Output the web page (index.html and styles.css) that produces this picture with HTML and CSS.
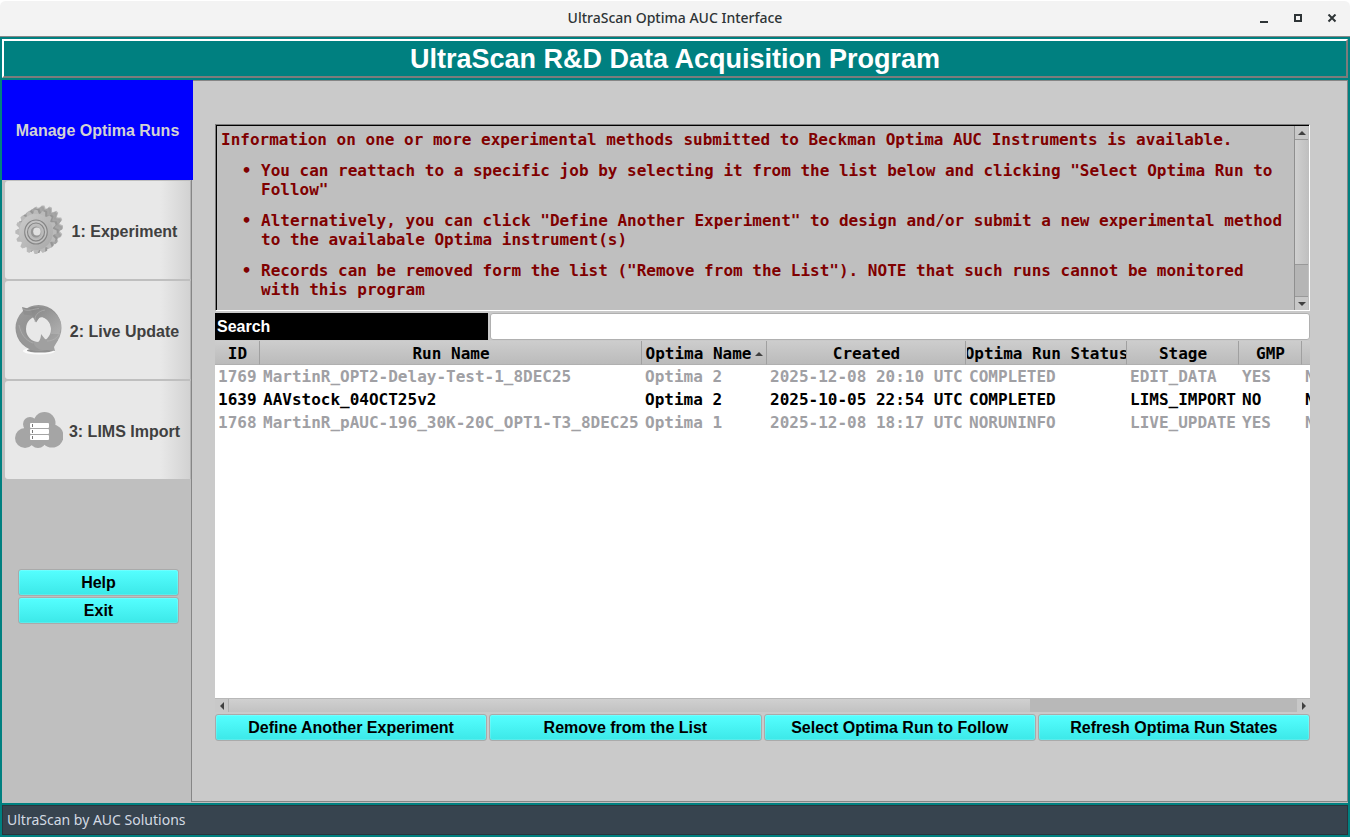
FILE: index.html
```html
<!DOCTYPE html>
<html lang="en">
<head>
    <meta charset="UTF-8">
    <meta name="viewport" content="width=device-width, initial-scale=1.0">
    <title>UltraScan Optima AUC Interface</title>
    <link rel="stylesheet" href="styles.css">
</head>
<body>
    <div class="titlebar">
        <span class="titlebar-text">UltraScan Optima AUC Interface</span>
        <div class="window-controls">
            <button type="button" aria-label="Minimize">
                <svg width="10" height="10" viewBox="0 0 10 10"><path d="M1 7h8v2H1z" fill="#2e3436"/></svg>
            </button>
            <button type="button" aria-label="Maximize">
                <svg width="10" height="10" viewBox="0 0 10 10"><path d="M2 1h6v6H2z" fill="none" stroke="#2e3436" stroke-width="2"/></svg>
            </button>
            <button type="button" aria-label="Close">
                <svg width="10" height="10" viewBox="0 0 10 10"><path d="M1.500 .5l7 7M8.500 .5l-7 7" stroke="#2e3436" stroke-width="2"/></svg>
            </button>
        </div>
    </div>

    <div class="window">
        <h1 class="banner">UltraScan R&amp;D Data Acquisition Program</h1>

        <div class="workspace">
            <nav class="sidebar">
                <button type="button" class="tab tab-active"><span>Manage Optima Runs</span></button>
                <button type="button" class="tab">
                    <svg class="tab-icon" width="48" height="50" viewBox="0 0 48 50">
                        <defs>
                            <linearGradient id="gearFace" x1="0" y1="0" x2="1" y2="1">
                                <stop offset="0" stop-color="#cbcbcb"/>
                                <stop offset="1" stop-color="#a8a8a8"/>
                            </linearGradient>
                            <path id="tooth" d="M-4 -16 L-1.500 -22 H1.500 L4 -16 Z"/>
                            <g id="gear">
                                <circle r="18.500"/>
                                <use href="#tooth"/>
                                <use href="#tooth" transform="rotate(22.500)"/>
                                <use href="#tooth" transform="rotate(45)"/>
                                <use href="#tooth" transform="rotate(67.500)"/>
                                <use href="#tooth" transform="rotate(90)"/>
                                <use href="#tooth" transform="rotate(112.500)"/>
                                <use href="#tooth" transform="rotate(135)"/>
                                <use href="#tooth" transform="rotate(157.500)"/>
                                <use href="#tooth" transform="rotate(180)"/>
                                <use href="#tooth" transform="rotate(202.500)"/>
                                <use href="#tooth" transform="rotate(225)"/>
                                <use href="#tooth" transform="rotate(247.500)"/>
                                <use href="#tooth" transform="rotate(270)"/>
                                <use href="#tooth" transform="rotate(292.500)"/>
                                <use href="#tooth" transform="rotate(315)"/>
                                <use href="#tooth" transform="rotate(337.500)"/>
                            </g>
                        </defs>
                        <g transform="translate(28 22) scale(.92 .98)" fill="#b8b8b8"><use href="#gear"/></g>
                        <g transform="translate(27 23) scale(.92 .98)" fill="#a2a2a2"><use href="#gear"/></g>
                        <g transform="translate(25 24) scale(.92 .98)" fill="#a6a6a6"><use href="#gear"/></g>
                        <g transform="translate(23 26) scale(.94 1)" fill="#969696"><use href="#gear"/></g>
                        <g transform="translate(21 27) scale(.94 1)">
                            <use href="#gear" fill="#bababa"/>
                            <circle r="18" fill="url(#gearFace)"/>
                            <g fill="none">
                                <circle r="12" stroke="#858585" stroke-width="1.200"/>
                                <circle r="10.500" stroke="#c6c6c6"/>
                                <circle r="9" stroke="#858585" stroke-width="1.200"/>
                                <circle r="7.500" stroke="#bebebe"/>
                            </g>
                            <circle r="5.500" fill="#969696"/>
                            <circle cx="1" cy="-.5" r="4" fill="#e0e0e0"/>
                        </g>
                    </svg>
                    <span>1: Experiment</span>
                </button>
                <button type="button" class="tab">
                    <svg class="tab-icon" width="48" height="50" viewBox="0 0 48 50">
                        <defs>
                            <linearGradient id="ring" x1="0" y1="0" x2="1" y2="1">
                                <stop offset="0" stop-color="#9c9c9c"/>
                                <stop offset=".45" stop-color="#919191"/>
                                <stop offset="1" stop-color="#ababab"/>
                            </linearGradient>
                            <linearGradient id="sweep" x1="0" y1="0" x2="1" y2="1">
                                <stop offset="0" stop-color="#858585"/>
                                <stop offset="1" stop-color="#b0b0b0"/>
                            </linearGradient>
                        </defs>
                        <ellipse cx="24" cy="46" rx="16" ry="3.500" fill="#fafafa"/>
                        <ellipse cx="25" cy="45.500" rx="13" ry="2" fill="#8f8f8f"/>
                        <path fill-rule="evenodd" fill="url(#ring)" d="M23.500 0a23 23 0 1 0 0 46a23 23 0 1 0 0-46zM23.500 11a12.500 13 0 1 1 0 26a12.500 13 0 1 1 0-26z"/>
                        <path fill="#8f8f8f" d="M7 2l6 1.500 4-2 8 2v8l-4 6-4-7-8-1z"/>
                        <path fill="url(#sweep)" d="M15 3c11-3 24 0 30 12 2 5 1 10-1 14h-8c1-7-1-12-5-15-3-2-5-2-7-1l-3 4-3-7z"/>
                        <path fill="#979797" d="M2 17c-2 12 3 22 13 27 6 2 11 2 16-1-6-1-9-3-13-6-6-4-8-8-10-14z"/>
                        <path fill="#a0a0a0" d="M26 29l4 5 5 2 8-1-4 7 1 4-8-1c-7 1-12-2-14-8h5c2-1 3-5 3-8z"/>
                        <path d="M8 4c5 3 10 0 16-.500M20 17c-1-6 3-11 10-12M45 28c-3 5-7 8-13 8M4 20c2 9 6 15 14 18" fill="none" stroke="#b5b5b5" stroke-width=".6"/>
                    </svg>
                    <span>2: Live Update</span>
                </button>
                <button type="button" class="tab">
                    <svg class="tab-icon" width="48" height="50" viewBox="0 0 48 50">
                        <g fill="#a5a5a5">
                            <circle cx="10" cy="33" r="10"/>
                            <circle cx="15" cy="19" r="7"/>
                            <circle cx="29.500" cy="18" r="11"/>
                            <circle cx="37" cy="31" r="11.500"/>
                            <circle cx="23" cy="35" r="8"/>
                            <path d="M9 20h30v16H9z"/>
                        </g>
                        <g fill="#fff">
                            <rect x="15" y="18" width="19" height="5" rx="1"/>
                            <rect x="15" y="24" width="19" height="5" rx="1"/>
                            <rect x="15" y="30" width="19" height="5" rx="1"/>
                        </g>
                        <path d="M17 19h1v3h-1zM17 25h1v3h-1zM17 31h1v3h-1z" fill="#777"/>
                    </svg>
                    <span>3: LIMS Import</span>
                </button>
                <div class="sidebar-actions">
                    <button type="button" class="btn">Help</button>
                    <button type="button" class="btn">Exit</button>
                </div>
            </nav>

            <main class="panel">
                <section class="info">
                    <div class="info-text">
                        <p>Information on one or more experimental methods submitted to Beckman Optima AUC Instruments is available.</p>
                        <ul>
                            <li>You can reattach to a specific job by selecting it from the list below and clicking "Select Optima Run to Follow"</li>
                            <li>Alternatively, you can click "Define Another Experiment" to design and/or submit a new experimental method to the availabale Optima instrument(s)</li>
                            <li>Records can be removed form the list ("Remove from the List"). NOTE that such runs cannot be monitored with this program</li>
                        </ul>
                    </div>
                    <div class="vscroll">
                        <button type="button" aria-label="Scroll up"><svg width="8" height="4" viewBox="0 0 8 4"><path d="M0 4l4-4 4 4z" fill="#404040"/></svg></button>
                        <div class="vscroll-track"><div class="vscroll-thumb"></div></div>
                        <button type="button" aria-label="Scroll down"><svg width="8" height="4" viewBox="0 0 8 4"><path d="M0 0l4 4 4-4z" fill="#404040"/></svg></button>
                    </div>
                </section>

                <div class="search">
                    <label for="search">Search</label>
                    <input type="text" id="search" name="search">
                </div>

                <div class="runs">
                    <table>
                        <colgroup>
                            <col class="col-id"><col class="col-name"><col class="col-optima"><col class="col-created">
                            <col class="col-status"><col class="col-stage"><col class="col-gmp"><col class="col-more">
                        </colgroup>
                        <thead>
                            <tr>
                                <th><span>ID</span></th>
                                <th><span>Run Name</span></th>
                                <th><span>Optima Name<svg class="sort" width="8" height="4" viewBox="0 0 8 4"><path d="M0 4l4-4 4 4z" fill="#404040"/></svg></span></th>
                                <th><span>Created</span></th>
                                <th><span>Optima Run Status</span></th>
                                <th><span>Stage</span></th>
                                <th><span>GMP</span></th>
                                <th></th>
                            </tr>
                        </thead>
                        <tbody>
                            <tr class="disabled">
                                <td>1769</td><td>MartinR_OPT2-Delay-Test-1_8DEC25</td><td>Optima 2</td><td>2025-12-08 20:10 UTC</td><td>COMPLETED</td><td>EDIT_DATA</td><td>YES</td><td>N</td>
                            </tr>
                            <tr>
                                <td>1639</td><td>AAVstock_04OCT25v2</td><td>Optima 2</td><td>2025-10-05 22:54 UTC</td><td>COMPLETED</td><td>LIMS_IMPORT</td><td>NO</td><td>N</td>
                            </tr>
                            <tr class="disabled">
                                <td>1768</td><td>MartinR_pAUC-196_30K-20C_OPT1-T3_8DEC25</td><td>Optima 1</td><td>2025-12-08 18:17 UTC</td><td>NORUNINFO</td><td>LIVE_UPDATE</td><td>YES</td><td>N</td>
                            </tr>
                        </tbody>
                    </table>
                </div>
                <div class="hscroll">
                    <button type="button" aria-label="Scroll left"><svg width="4" height="8" viewBox="0 0 4 8"><path d="M4 0L0 4l4 4z" fill="#404040"/></svg></button>
                    <div class="hscroll-track"><div class="hscroll-thumb"></div></div>
                    <button type="button" aria-label="Scroll right"><svg width="4" height="8" viewBox="0 0 4 8"><path d="M0 0l4 4-4 4z" fill="#404040"/></svg></button>
                </div>

                <div class="actions">
                    <button type="button" class="btn">Define Another Experiment</button>
                    <button type="button" class="btn">Remove from the List</button>
                    <button type="button" class="btn">Select Optima Run to Follow</button>
                    <button type="button" class="btn">Refresh Optima Run States</button>
                </div>
            </main>
        </div>

        <footer class="statusbar">UltraScan by AUC Solutions</footer>
    </div>
</body>
</html>
```
FILE: styles.css
```css
* {
    box-sizing: border-box;
}
body {
    margin: 0;
    height: 100vh;
    display: flex;
    flex-direction: column;
    overflow: hidden;
    font-family: "Liberation Sans", Arial, sans-serif;
    font-size: 16px;
    font-weight: bold;
    color: #000;
    background-color: #fff;
}
button {
    font: inherit;
    margin: 0;
    padding: 0;
    border: none;
}
svg {
    display: block;
}

/* window frame */
.titlebar {
    height: 37px;
    flex: none;
    display: grid;
    grid-template-columns: 1fr auto 1fr;
    align-items: center;
    background-color: #f3f3f3;
    border-top: 1px solid #fff;
    border-bottom: 1px solid #888;
    border-radius: 6px 6px 0 0;
    color: #2e3436;
    font-family: "Noto Sans", sans-serif;
    font-size: 14px;
    font-weight: 500;
}
.titlebar-text {
    grid-column: 2;
    margin-top: -2px;
}
.window-controls {
    display: flex;
    justify-content: flex-end;
    gap: 24px;
    padding-right: 13px;
}
.window-controls button {
    background: none;
}
.window {
    flex: 1;
    min-height: 0;
    display: flex;
    flex-direction: column;
    padding: 2px;
    background-color: #008080;
}
.banner {
    margin: 0;
    height: 39px;
    line-height: 37px;
    border: 2px solid;
    border-color: #fff #7c7c7c #7c7c7c #fff;
    color: #fff;
    font-size: 27px;
    text-align: center;
}
.workspace {
    flex: 1;
    min-height: 0;
    display: flex;
    margin: 2px 0;
    background-color: #bfbfbf;
}

/* sidebar */
.sidebar {
    width: 189px;
    flex: none;
    display: flex;
    flex-direction: column;
}
.tab {
    height: 98px;
    flex: none;
    display: flex;
    align-items: center;
    margin: 1px 0 1px 3px;
    padding: 0 4px 0 10px;
    border-right: 1px solid #b4b4b4;
    border-radius: 3px 0 0 3px;
    background: linear-gradient(to right, #e8e8e8 84%, #d2d2d2);
    color: #404040;
    white-space: nowrap;
}
.tab span {
    flex: 1;
    padding-top: 3px;
}
.tab-icon {
    flex: none;
}
.tab-active {
    height: 100px;
    width: 191px;
    margin: 0;
    padding: 0;
    position: relative;
    border: none;
    border-radius: 0;
    background: #00f;
    color: #d3d3d3;
}
.tab-active span {
    padding-top: 1px;
}
.sidebar-actions {
    display: flex;
    flex-direction: column;
    gap: 1px;
    margin: 89px 12px 0 16px;
}
.btn {
    height: 27px;
    border: 1px solid #aaa;
    border-radius: 3px;
    background: linear-gradient(#55ffff, #3ce8e8);
    box-shadow: inset 0 0 0 1px rgba(255, 255, 255, 0.15);
    color: #000;
}

/* main panel */
.panel {
    flex: 1;
    min-width: 0;
    display: flex;
    flex-direction: column;
    margin-bottom: 1px;
    padding: 43px 37px 60px 23px;
    border: 1px solid #868686;
    background-color: #cacaca;
}
.info {
    height: 187px;
    flex: none;
    display: flex;
    overflow: hidden;
    border: 1px solid;
    border-color: #7c7c7c #fff #fff #7c7c7c;
    background-color: #bfbfbf;
    box-shadow: inset 1px 1px 0 #000;
    color: #800000;
    font-family: "DejaVu Sans Mono", monospace;
    line-height: 19px;
}
.info-text {
    flex: 1;
    padding: 5px 4px 0 5px;
}
.info p {
    margin: 0;
}
.info ul {
    margin: 12px 0 0;
    padding-left: 40px;
}
.info li {
    margin-bottom: 12px;
}
.info li::marker {
    content: "• ";
}
.vscroll {
    width: 15px;
    display: flex;
    flex-direction: column;
    margin-top: 1px;
    padding-right: 1px;
    border-left: 1px solid #8f8f8f;
}
.vscroll button {
    height: 13px;
    display: grid;
    place-items: center;
    background-color: #c8c8c8;
}
.vscroll-track {
    flex: 1;
    border: 1px solid #999;
    border-width: 1px 0;
    background-color: #b5b5b5;
}
.vscroll-thumb {
    height: 80%;
    border-bottom: 1px solid #999;
    background: linear-gradient(to right, #d0d0d0, #c0c0c0);
}
.search {
    display: grid;
    grid-template-columns: 1fr 3fr;
    gap: 2px;
    margin: 2px 0 1px;
}
.search label {
    line-height: 27px;
    padding-left: 2px;
    background-color: #000;
    color: #fff;
}
.search input {
    width: 100%;
    min-width: 0;
    height: 27px;
    padding: 0 4px;
    border: 1px solid #b0b0b0;
    border-radius: 3px;
    background-color: #fff;
    font: inherit;
}

/* runs table */
.runs {
    flex: 1;
    min-height: 0;
    overflow: hidden;
    background-color: #fff;
}
table {
    width: 1180px;
    table-layout: fixed;
    border-collapse: separate;
    border-spacing: 0;
    font-family: "DejaVu Sans Mono", monospace;
    line-height: 23px;
}
.col-id { width: 45px; }
.col-name { width: 382px; }
.col-optima { width: 125px; }
.col-created { width: 199px; }
.col-status { width: 161px; }
.col-stage { width: 112px; }
.col-gmp { width: 63px; }
th {
    height: 24px;
    padding: 0 0 0 1px;
    overflow: hidden;
    border-right: 1px solid #a0a0a0;
    border-bottom: 1px solid #b0b0b0;
    background: linear-gradient(#cdcdcd, #bbb);
}
th span {
    height: 23px;
    display: flex;
    justify-content: center;
    align-items: center;
    overflow: hidden;
    padding-top: 2px;
    white-space: nowrap;
}
.sort {
    flex: none;
    margin-left: 4px;
}
td {
    padding: 0 0 0 3px;
    white-space: nowrap;
}
.disabled {
    color: #a0a0a4;
}
.hscroll {
    height: 14px;
    flex: none;
    display: flex;
    border-top: 1px solid #b8b8b8;
}
.hscroll button {
    width: 13px;
    display: grid;
    place-items: center;
    background-color: #c8c8c8;
}
.hscroll-track {
    flex: 1;
    border-left: 1px solid #b0b0b0;
    background-color: #b8b8b8;
}
.hscroll-thumb {
    width: 75%;
    height: 100%;
    background: linear-gradient(#d0d0d0, #c2c2c2);
}
.actions {
    display: grid;
    grid-template-columns: repeat(4, 1fr);
    gap: 2px;
    margin-top: 2px;
}

.statusbar {
    height: 30px;
    flex: none;
    line-height: 28px;
    padding-left: 4px;
    border: 1px solid #2b343c;
    background-color: #37444f;
    color: #d3dae3;
    font-family: "Noto Sans", sans-serif;
    font-size: 14px;
    font-weight: normal;
}
```
